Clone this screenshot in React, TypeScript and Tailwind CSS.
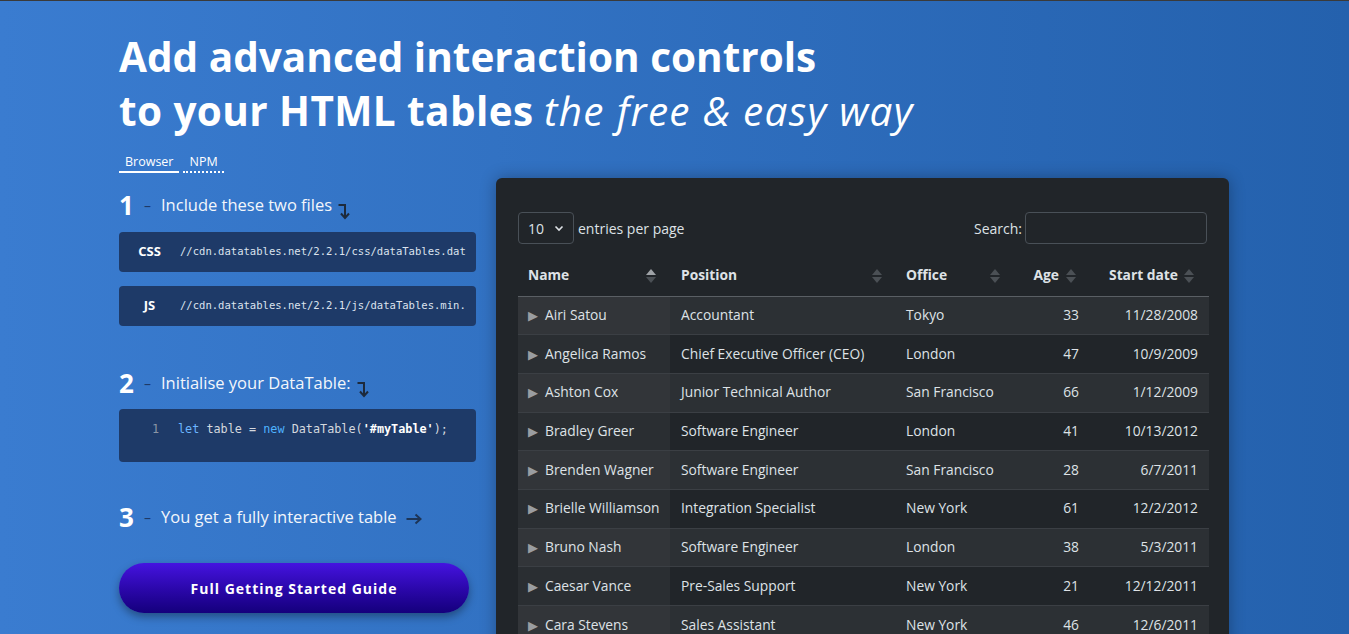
import React from 'react';

const rows = [
  ['Airi Satou', 'Accountant', 'Tokyo', '33', '11/28/2008'],
  ['Angelica Ramos', 'Chief Executive Officer (CEO)', 'London', '47', '10/9/2009'],
  ['Ashton Cox', 'Junior Technical Author', 'San Francisco', '66', '1/12/2009'],
  ['Bradley Greer', 'Software Engineer', 'London', '41', '10/13/2012'],
  ['Brenden Wagner', 'Software Engineer', 'San Francisco', '28', '6/7/2011'],
  ['Brielle Williamson', 'Integration Specialist', 'New York', '61', '12/2/2012'],
  ['Bruno Nash', 'Software Engineer', 'London', '38', '5/3/2011'],
  ['Caesar Vance', 'Pre-Sales Support', 'New York', '21', '12/12/2011'],
  ['Cara Stevens', 'Sales Assistant', 'New York', '46', '12/6/2011'],
];

const SortIcon = ({ asc = false }: { asc?: boolean }) => (
  <svg width="10" height="16" viewBox="0 0 10 16" className="block">
    <path d="M5 1 L10 7 L0 7 Z" fill={asc ? '#9fa3a7' : '#4b5055'} />
    <path d="M5 15 L10 9 L0 9 Z" fill="#4b5055" />
  </svg>
);

const DownArrow = () => (
  <svg width="12" height="17" viewBox="0 0 12 17" className="ml-[6px] mt-[12px]">
    <path d="M0.5 2 H7 V14" stroke="#1d2a3c" strokeWidth="2" fill="none" />
    <path d="M3 10.5 L7 15 L11 10.5" stroke="#1d2a3c" strokeWidth="2" fill="none" />
  </svg>
);

const RightArrow = () => (
  <svg width="16" height="12" viewBox="0 0 16 12" className="ml-[9px] mt-[4px]">
    <path d="M0.5 6 H14" stroke="#1d3557" strokeWidth="2" fill="none" />
    <path d="M9.5 1.5 L14.5 6 L9.5 10.5" stroke="#1d3557" strokeWidth="2" fill="none" />
  </svg>
);

const Step = ({ n, text, right = false }: { n: string; text: string; right?: boolean }) => (
  <div className="flex items-center h-[30px]">
    <span className="text-[26px] font-bold text-white w-[25px]">{n}</span>
    <span className="text-[#1e3a68] text-[14px] w-[17px]">–</span>
    <span className="text-[16.5px] text-[#f3f6fb]">{text}</span>
    {right ? <RightArrow /> : <DownArrow />}
  </div>
);

const mono = { fontFamily: '"DejaVu Sans Mono", monospace' };

export default function App() {
  return (
    <div
      className="w-[1349px] h-[634px] overflow-hidden border-t border-[#3a3a3a] bg-gradient-to-r from-[#3a7cd0] to-[#2461ad] text-white"
      style={{ fontFamily: '"Open Sans", "Noto Sans", sans-serif' }}
    >
      <div className="ml-[119px] pt-[29px]">
        <h1 className="text-[40.5px] leading-[54px] font-bold whitespace-nowrap">
          Add advanced interaction controls
          <br />
          <span className="tracking-[0.4px]">to your HTML tables</span>{' '}
          <span className="italic font-normal tracking-[1.3px]">the free &amp; easy way</span>
        </h1>

        <div className="flex gap-[4px] mt-[16px] text-[12.5px] leading-[16px]">
          <span className="px-[6px] pb-[1px] border-b-2 border-white">Browser</span>
          <span className="px-[6px] pb-[1px] border-b-2 border-dotted border-white">NPM</span>
        </div>

        <div className="flex mt-[5px] gap-[20px]">
          {/* left steps */}
          <div className="w-[357px] pt-[12px]">
            <Step n="1" text="Include these two files" />
            <div className="mt-[12px] h-[40px] rounded-[4px] bg-[#1e3a68] flex items-center">
              <span className="shrink-0 w-[61px] text-center text-[13px] font-bold">CSS</span>
              <span className="whitespace-nowrap text-[10.55px] text-[#dce3ee]" style={mono}>
                //cdn.datatables.net/2.2.1/css/dataTables.dat
              </span>
            </div>
            <div className="mt-[14px] h-[40px] rounded-[4px] bg-[#1e3a68] flex items-center">
              <span className="shrink-0 w-[61px] text-center text-[13px] font-bold">JS</span>
              <span className="whitespace-nowrap text-[10.55px] text-[#dce3ee]" style={mono}>
                //cdn.datatables.net/2.2.1/js/dataTables.min.
              </span>
            </div>

            <div className="mt-[42px]">
              <Step n="2" text="Initialise your DataTable:" />
            </div>
            <div className="mt-[11px] h-[53px] rounded-[4px] bg-[#1e3a68] flex pt-[12px] text-[11.8px]" style={mono}>
              <span className="shrink-0 w-[40px] text-right text-[#8b96a6]">1</span>
              <span className="ml-[19px] text-[#d4d8de] whitespace-nowrap">
                <span className="text-[#6cb6ff]">let</span> table = <span className="text-[#4fb3ff]">new</span> DataTable(<span className="text-white font-bold">'#myTable'</span>);
              </span>
            </div>

            <div className="mt-[40px]">
              <Step n="3" text="You get a fully interactive table" right />
            </div>

            <button className="mt-[31px] w-[350px] h-[50px] rounded-full bg-gradient-to-b from-[#4513e0] to-[#14007c] text-white text-[14px] font-bold tracking-[1px] shadow-[0_4px_8px_rgba(0,0,0,0.35)]">
              Full Getting Started Guide
            </button>
          </div>

          {/* table card */}
          <div className="w-[733px] h-[500px] rounded-[6px] bg-[#212529] shadow-[0_0_16px_rgba(0,0,0,0.3)] px-[22px] pt-[34px] text-[#dee2e6]">
            <div className="flex items-center justify-between h-[32px] text-[14px]">
              <div className="flex items-center gap-[4px]">
                <div className="w-[56px] h-[32px] rounded-[4px] border border-[#495057] flex items-center justify-between px-[9px]">
                  <span>10</span>
                  <svg width="10" height="10" viewBox="0 0 10 10">
                    <path d="M1.5 3.5 L5 7 L8.5 3.5" stroke="#dee2e6" strokeWidth="1.6" fill="none" />
                  </svg>
                </div>
                <span>entries per page</span>
              </div>
              <div className="flex items-center gap-[3px]">
                <span>Search:</span>
                <div className="w-[182px] h-[32px] rounded-[4px] border border-[#495057]" />
              </div>
            </div>

            <table className="mt-[12px] w-[691px] table-fixed border-collapse text-[13.8px]">
              <colgroup>
                <col className="w-[152px]" />
                <col className="w-[226px]" />
                <col className="w-[118px]" />
                <col className="w-[75px]" />
                <col className="w-[120px]" />
              </colgroup>
              <thead>
                <tr className="h-[40px] border-b border-[#5a5f64]">
                  <th className="relative text-left font-bold pl-[10px]">Name<span className="absolute right-[14px] top-1/2 -translate-y-1/2"><SortIcon asc /></span></th>
                  <th className="relative text-left font-bold pl-[11px]">Position<span className="absolute right-[14px] top-1/2 -translate-y-1/2"><SortIcon /></span></th>
                  <th className="relative text-left font-bold pl-[10px]">Office<span className="absolute right-[14px] top-1/2 -translate-y-1/2"><SortIcon /></span></th>
                  <th className="relative text-right font-bold pr-[30px]">Age<span className="absolute right-[13px] top-1/2 -translate-y-1/2"><SortIcon /></span></th>
                  <th className="relative text-right font-bold pr-[31px]">Start date<span className="absolute right-[15px] top-1/2 -translate-y-1/2"><SortIcon /></span></th>
                </tr>
              </thead>
              <tbody>
                {rows.map((r, i) => (
                  <tr key={r[0]} className={`h-[38.7px] border-b border-[#3b3f44] ${i % 2 === 0 ? 'bg-[#2c3034]' : ''}`}>
                    <td className={`pl-[10px] whitespace-nowrap ${i % 2 === 0 ? 'bg-[#323539]' : 'bg-[#2a2e32]'}`}>
                      <span className="text-[#9a9da1] text-[13px] mr-[7px]">▶</span>
                      {r[0]}
                    </td>
                    <td className="pl-[11px] whitespace-nowrap">{r[1]}</td>
                    <td className="pl-[10px] whitespace-nowrap">{r[2]}</td>
                    <td className="text-right pr-[10px]">{r[3]}</td>
                    <td className="text-right pr-[11px]">{r[4]}</td>
                  </tr>
                ))}
              </tbody>
            </table>
          </div>
        </div>
      </div>
    </div>
  );
}
